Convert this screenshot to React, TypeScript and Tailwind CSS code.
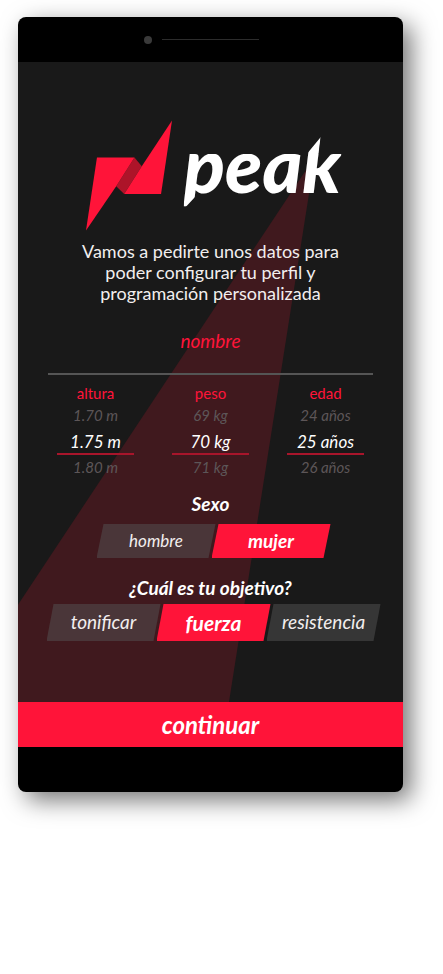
import { useState } from "react";

type Wheel = { label: string; options: string[] };

const wheels: Wheel[] = [
  { label: "altura", options: ["1.70 m", "1.75 m", "1.80 m"] },
  { label: "peso", options: ["69 kg", "70 kg", "71 kg"] },
  { label: "edad", options: ["24 años", "25 años", "26 años"] },
];

function Logo() {
  return (
    <div className="flex items-start justify-center pl-[6px]">
      <svg viewBox="47 30 259 332" className="h-[111px] w-[86px] shrink-0" aria-hidden="true">
        <polygon points="138,228 162,252 215,168 193,142" fill="#ad1429" />
        <polygon points="80,142 193,142 138,228 47,362" fill="#ff1439" />
        <polygon points="306,30 273,252 162,252 215,168" fill="#ff1439" />
      </svg>
      <h1 className="ml-3 h-[111px] text-[76px] leading-[88px] font-black text-white italic [clip-path:polygon(0_34px,123px_34px,137px_17px,135px_34px,100%_34px,100%_77px,18px_77px,14px_74px,1px_88px,0px_88px)]">
        peak
      </h1>
    </div>
  );
}

function Picker({ label, options }: Wheel) {
  const [selected, setSelected] = useState(1);
  return (
    <fieldset className="flex flex-1 flex-col items-center">
      <legend className="w-full text-center text-[15px] leading-5 text-[#ff1439]">{label}</legend>
      {options.map((option, index) => (
        <label
          key={option}
          className={
            index === selected
              ? "flex h-7 w-full items-center justify-center border-b-2 border-b-[#a8152b] pt-1 text-[17px] text-white italic"
              : "flex h-6 w-full items-center justify-center text-[15px] text-[#5d5658] italic"
          }
        >
          <input
            type="radio"
            name={label}
            className="sr-only"
            checked={index === selected}
            onChange={() => setSelected(index)}
          />
          {option}
        </label>
      ))}
    </fieldset>
  );
}

type ChoiceProps = {
  options: string[];
  value: string;
  onChange: (value: string) => void;
  size: string;
  idleText: string;
  activeText: string;
};

function Choice({ options, value, onChange, size, idleText, activeText }: ChoiceProps) {
  return (
    <div className="flex justify-center pl-[6px]">
      {options.map((option) => (
        <button
          key={option}
          type="button"
          aria-pressed={option === value}
          onClick={() => onChange(option)}
          className={`-ml-1 flex items-center justify-center italic [clip-path:polygon(7px_0,100%_0,calc(100%_-_7px)_100%,0_100%)] first:ml-0 ${size} ${
            option === value
              ? `bg-[#ff1439] font-bold text-white ${activeText}`
              : `bg-[#535353]/50 text-[#f2eeee] ${idleText}`
          }`}
        >
          {option}
        </button>
      ))}
    </div>
  );
}

export default function App() {
  const [gender, setGender] = useState("mujer");
  const [goal, setGoal] = useState("fuerza");

  return (
    <div className="min-h-screen bg-white pt-[17px] pr-10 pl-[18px] font-['Lato',sans-serif]">
      <main className="overflow-hidden rounded-lg bg-black shadow-[8px_8px_24px_rgba(0,0,0,0.55)]">
        <div className="flex h-[45px] items-center justify-center gap-[10px]">
          <span className="size-2 rounded-full bg-[#3a3a3a]" />
          <span className="mr-[18px] h-px w-[97px] bg-[#2c2c2c]" />
        </div>

        <form className="bg-[#191919]" onSubmit={(event) => event.preventDefault()}>
          <div className="grid">
            <div
              aria-hidden="true"
              className="col-start-1 row-start-1 bg-[#40191e] [clip-path:polygon(77.1%_14.8%,54.8%_100%,0_100%,0_84.8%)]"
            />
            <div className="z-10 col-start-1 row-start-1 px-5 pt-[58px] pb-[61px]">
              <Logo />

              <p className="mt-[10px] text-center text-[18px] leading-[21px] text-[#f2eeee]">
                Vamos a pedirte unos datos para
                <br />
                poder configurar tu perfil y
                <br />
                programación personalizada
              </p>

              <div className="mt-3 px-[10px]">
                <input
                  type="text"
                  aria-label="nombre"
                  placeholder="nombre"
                  className="block h-[59px] w-full border-b-2 border-[#555] pb-2 text-center text-[19px] text-[#ff1439] italic outline-none placeholder:text-[#ff1439]"
                />
              </div>

              <div className="mt-2 flex gap-[38px] px-[19px]">
                {wheels.map((wheel) => (
                  <Picker key={wheel.label} {...wheel} />
                ))}
              </div>

              <h2 className="mt-[13px] mb-2 text-center text-[19px] leading-6 font-bold text-white italic">Sexo</h2>
              <Choice
                options={["hombre", "mujer"]}
                value={gender}
                onChange={setGender}
                size="h-[34px] w-[119px]"
                idleText="text-[17px]"
                activeText="text-[19px]"
              />

              <h2 className="mt-[18px] mb-1 text-center text-[19px] leading-6 font-bold text-white italic">
                ¿Cuál es tu objetivo?
              </h2>
              <Choice
                options={["tonificar", "fuerza", "resistencia"]}
                value={goal}
                onChange={setGoal}
                size="h-[37px] w-[114px]"
                idleText="text-[19px]"
                activeText="text-[21px]"
              />
            </div>
          </div>

          <button type="submit" className="h-[45px] w-full bg-[#ff1439] text-2xl font-bold text-white italic">
            continuar
          </button>
        </form>

        <div className="h-[45px]" />
      </main>
    </div>
  );
}
